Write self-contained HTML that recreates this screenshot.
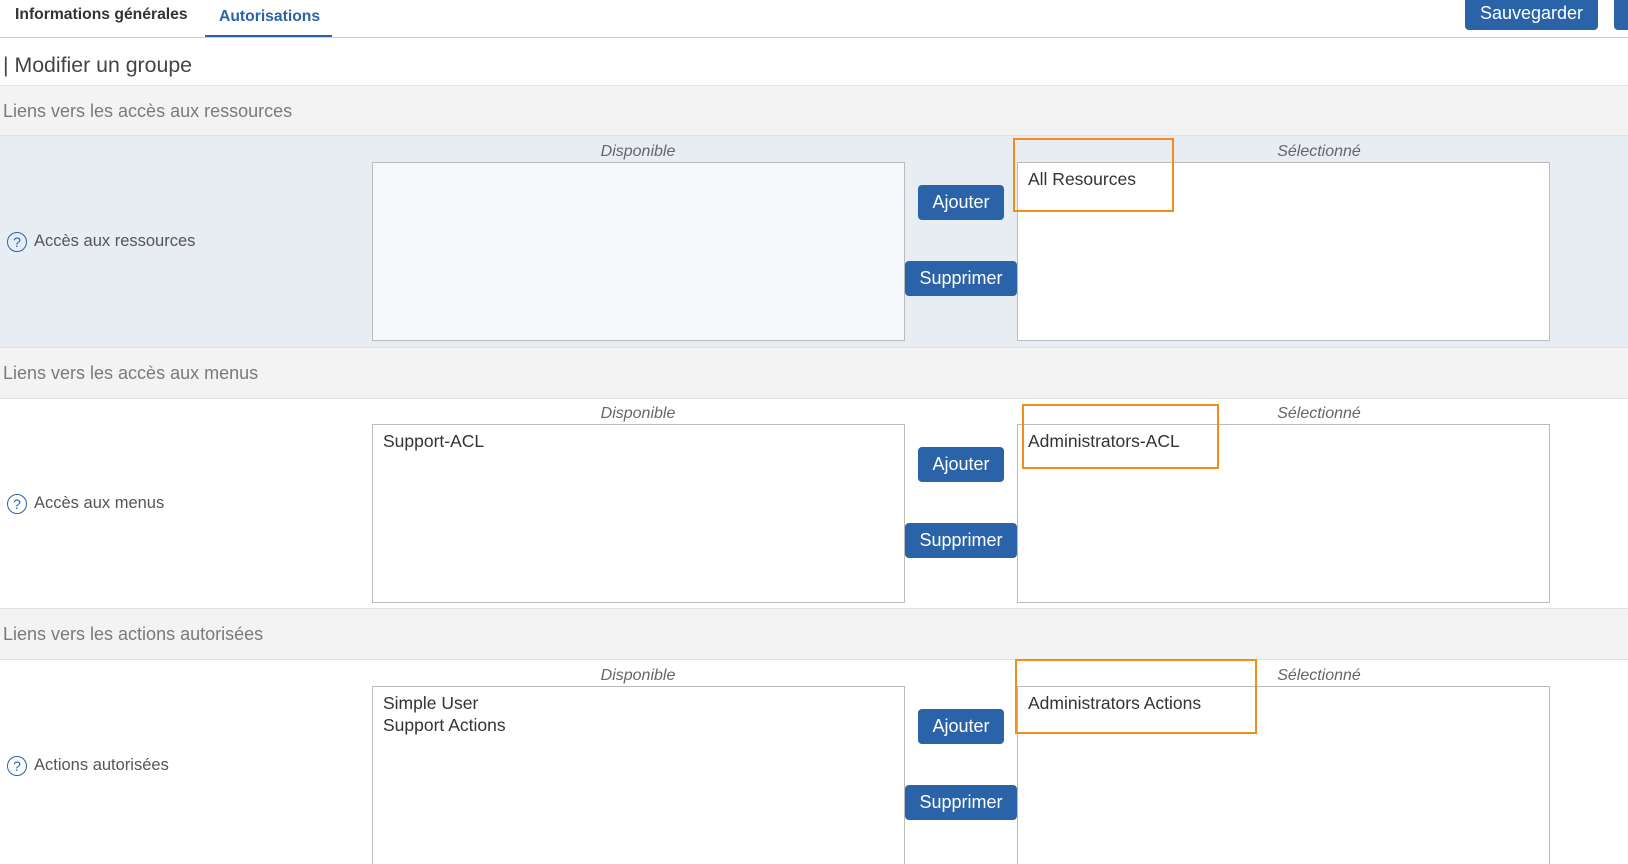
<!DOCTYPE html>
<html style="width:1628px;height:864px;overflow:hidden"><head><meta charset="utf-8"><style>
*{box-sizing:border-box;margin:0;padding:0}
body{width:1628px;height:864px;overflow:hidden;background:#fff;font-family:"Liberation Sans",sans-serif;position:relative;color:#333}
.a{position:absolute}
.tab{font-size:15.7px;font-weight:bold;top:6px}
.hdr{left:0;width:1628px;background:#f3f3f3;border-top:1px solid #e2e2e2;border-bottom:1px solid #e2e2e2;color:#7a7a7a;font-size:18px;padding-left:3px}
.row{left:0;width:1628px}
.lbl{font-style:italic;color:#666;font-size:16px;text-align:center}
.box{border:1px solid #bbb;background:#fff;font-size:17.5px;color:#333;padding:5px 10px;line-height:22px}
.btn{background:#2b63a8;color:#fff;border-radius:4px;font-size:18px;text-align:center;line-height:35px}
.or{border:2.5px solid #f28c1b}
.q{width:20px;height:20px;border:1.5px solid #2b63a8;border-radius:50%;color:#2b63a8;font-size:14px;text-align:center;line-height:18px}
.rl{font-size:16.5px;color:#555}
</style></head><body>
<div class="a tab" style="left:15px;color:#333">Informations générales</div>
<div class="a tab" style="left:219px;top:8px;color:#2b63a8">Autorisations</div>
<div class="a" style="left:205px;top:35px;width:127px;height:2px;background:#2b63a8"></div>
<div class="a" style="left:0;top:37px;width:1628px;height:1px;background:#ccc"></div>
<div class="a btn" style="left:1465px;top:0;width:133px;height:30px;line-height:26px;border-radius:0 0 4px 4px">Sauvegarder</div>
<div class="a btn" style="left:1614px;top:0;width:14px;height:30px;border-radius:0 0 0 4px"></div>
<div class="a" style="left:3px;top:53px;font-size:21.3px;color:#444">| Modifier un groupe</div>

<div class="a hdr" style="top:85px;height:51px;line-height:50px">Liens vers les accès aux ressources</div>
<div class="a row" style="top:136px;height:211px;background:#e8edf4"></div>
<div class="a hdr" style="top:347px;height:52px;line-height:50px">Liens vers les accès aux menus</div>
<div class="a hdr" style="top:608px;height:52px;line-height:50px">Liens vers les actions autorisées</div>

<!-- row 1 -->
<div class="a q" style="left:7px;top:232px">?</div>
<div class="a rl" style="left:34px;top:232px">Accès aux ressources</div>
<div class="a lbl" style="left:372px;width:532px;top:143px">Disponible</div>
<div class="a lbl" style="left:1053px;width:532px;top:143px">Sélectionné</div>
<div class="a box" style="left:372px;top:162px;width:533px;height:179px;background:#f6f8fb"></div>
<div class="a box" style="left:1017px;top:162px;width:533px;height:179px">All Resources</div>
<div class="a btn" style="left:918px;top:185px;width:86px">Ajouter</div>
<div class="a btn" style="left:905px;top:261px;width:112px">Supprimer</div>
<div class="a or" style="left:1013px;top:138px;width:161px;height:74px"></div>

<!-- row 2 -->
<div class="a q" style="left:7px;top:494px">?</div>
<div class="a rl" style="left:34px;top:494px">Accès aux menus</div>
<div class="a lbl" style="left:372px;width:532px;top:405px">Disponible</div>
<div class="a lbl" style="left:1053px;width:532px;top:405px">Sélectionné</div>
<div class="a box" style="left:372px;top:424px;width:533px;height:179px">Support-ACL</div>
<div class="a box" style="left:1017px;top:424px;width:533px;height:179px">Administrators-ACL</div>
<div class="a btn" style="left:918px;top:447px;width:86px">Ajouter</div>
<div class="a btn" style="left:905px;top:523px;width:112px">Supprimer</div>
<div class="a or" style="left:1022px;top:404px;width:197px;height:65px"></div>

<!-- row 3 -->
<div class="a q" style="left:7px;top:756px">?</div>
<div class="a rl" style="left:34px;top:756px">Actions autorisées</div>
<div class="a lbl" style="left:372px;width:532px;top:667px">Disponible</div>
<div class="a lbl" style="left:1053px;width:532px;top:667px">Sélectionné</div>
<div class="a box" style="left:372px;top:686px;width:533px;height:178px;border-bottom:none">Simple User<br>Support Actions</div>
<div class="a box" style="left:1017px;top:686px;width:533px;height:178px;border-bottom:none">Administrators Actions</div>
<div class="a btn" style="left:918px;top:709px;width:86px">Ajouter</div>
<div class="a btn" style="left:905px;top:785px;width:112px">Supprimer</div>
<div class="a or" style="left:1015px;top:659px;width:242px;height:75px"></div>
</body></html>
